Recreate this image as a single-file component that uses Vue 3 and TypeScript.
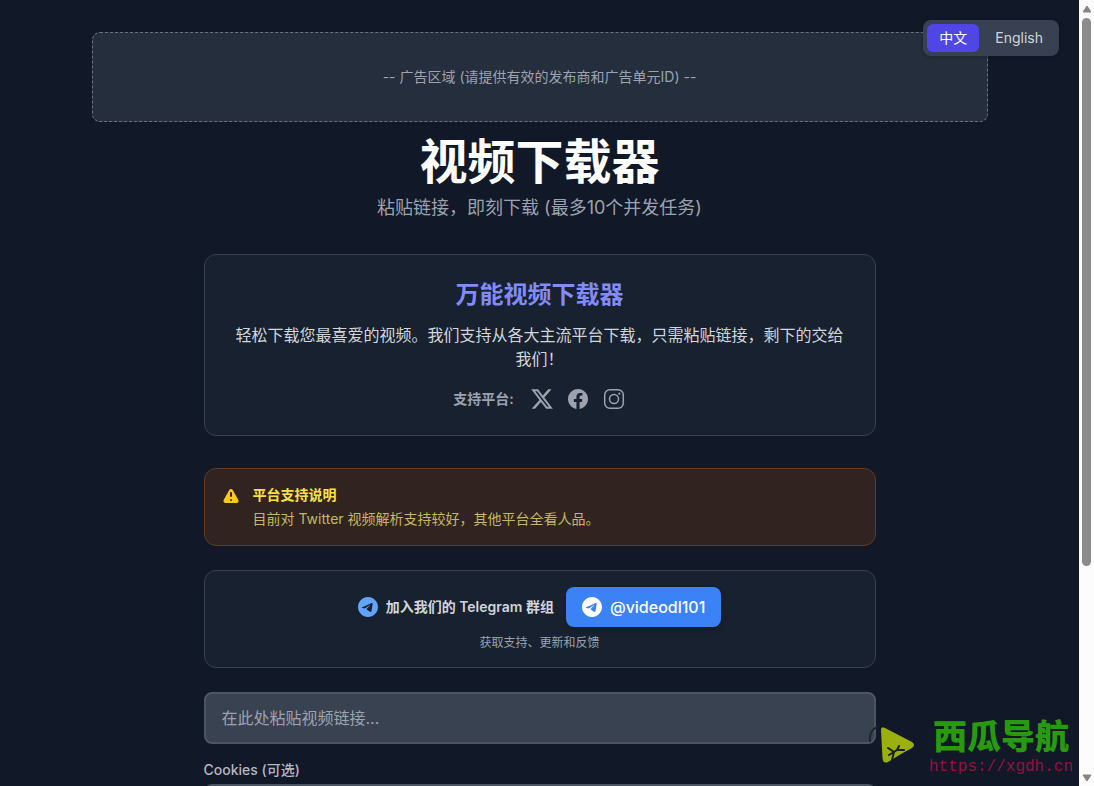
<script setup lang="ts">
import { ref } from 'vue'

type Lang = 'zh' | 'en'

const lang = ref<Lang>('zh')
const url = ref('')
const cookies = ref('')

const languages: { id: Lang; label: string }[] = [
  { id: 'zh', label: '中文' },
  { id: 'en', label: 'English' },
]
</script>

<template>
  <div class="shell">
    <div class="page">
      <nav class="lang" aria-label="Language">
        <button
          v-for="item in languages"
          :key="item.id"
          type="button"
          :class="['lang-btn', { active: lang === item.id }]"
          @click="lang = item.id"
        >{{ item.label }}</button>
      </nav>

      <div class="container">
        <aside class="ad">-- 广告区域 (请提供有效的发布商和广告单元ID) --</aside>

        <header class="head">
          <h1>视频下载器</h1>
          <p>粘贴链接，即刻下载 (最多10个并发任务)</p>
        </header>

        <main class="main">
          <section class="card intro">
            <h2>万能视频下载器</h2>
            <p class="desc">轻松下载您最喜爱的视频。我们支持从各大主流平台下载，只需粘贴链接，剩下的交给我们！</p>
            <div class="platforms">
              <span>支持平台:</span>
              <svg viewBox="0 0 24 24" aria-label="X"><path fill="currentColor" d="M18.244 2.25h3.308l-7.227 8.26 8.502 11.24H16.17l-5.214-6.817L4.99 21.75H1.68l7.73-8.835L1.254 2.25H8.08l4.713 6.231zm-1.161 17.52h1.833L7.084 4.126H5.117z" /></svg>
              <svg viewBox="0 0 24 24" aria-label="Facebook"><path fill="currentColor" d="M22 12c0-5.523-4.477-10-10-10S2 6.477 2 12c0 4.991 3.657 9.128 8.438 9.878v-6.987h-2.54V12h2.54V9.797c0-2.506 1.492-3.89 3.777-3.89 1.094 0 2.238.195 2.238.195v2.46h-1.26c-1.243 0-1.63.771-1.63 1.562V12h2.773l-.443 2.89h-2.33v6.988C18.343 21.128 22 16.991 22 12z" /></svg>
              <svg viewBox="0 0 24 24" fill="none" stroke="currentColor" aria-label="Instagram">
                <rect x="2.700" y="2.700" width="18.600" height="18.600" rx="5.200" stroke-width="1.500" />
                <circle cx="12" cy="12" r="4.500" stroke-width="1.500" />
                <circle cx="17.300" cy="6.700" r="1.100" fill="currentColor" stroke="none" />
              </svg>
            </div>
          </section>

          <section class="notice">
            <svg viewBox="0 0 20 20" aria-hidden="true"><path fill="currentColor" fill-rule="evenodd" d="M8.257 3.099c.765-1.36 2.722-1.36 3.486 0l5.58 9.92c.75 1.334-.213 2.98-1.742 2.98H4.42c-1.53 0-2.493-1.646-1.743-2.98l5.58-9.92zM11 13a1 1 0 11-2 0 1 1 0 012 0zm-1-8a1 1 0 00-1 1v3a1 1 0 002 0V6a1 1 0 00-1-1z" clip-rule="evenodd" /></svg>
            <div>
              <h3>平台支持说明</h3>
              <p>目前对 Twitter 视频解析支持较好，其他平台全看人品。</p>
            </div>
          </section>

          <section class="card telegram">
            <div class="join">
              <span class="join-label">
                <svg viewBox="2 2 20 20" aria-hidden="true"><path fill="currentColor" d="M12 2C6.48 2 2 6.48 2 12s4.48 10 10 10 10-4.48 10-10S17.52 2 12 2zm4.64 6.8c-.15 1.58-.8 5.42-1.13 7.19-.14.75-.42 1-.68 1.03-.58.05-1.02-.38-1.58-.75-.88-.58-1.38-.94-2.23-1.5-.99-.65-.35-1.01.22-1.59.15-.15 2.71-2.48 2.76-2.69a.2.2 0 00-.05-.18c-.06-.05-.14-.03-.21-.02-.09.02-1.49.95-4.22 2.79-.4.27-.76.41-1.08.4-.36-.01-1.04-.2-1.55-.37-.63-.2-1.12-.31-1.08-.66.02-.18.27-.36.74-.55 2.92-1.27 4.86-2.11 5.83-2.51 2.78-1.16 3.35-1.36 3.73-1.36.08 0 .27.02.39.12.1.08.13.19.14.27-.01.06.01.24 0 .38z" /></svg>
                加入我们的 Telegram 群组
              </span>
              <a class="join-btn" href="#videodl101">
                <svg viewBox="2 2 20 20" aria-hidden="true"><path fill="currentColor" d="M12 2C6.48 2 2 6.48 2 12s4.48 10 10 10 10-4.48 10-10S17.52 2 12 2zm4.64 6.8c-.15 1.58-.8 5.42-1.13 7.19-.14.75-.42 1-.68 1.03-.58.05-1.02-.38-1.58-.75-.88-.58-1.38-.94-2.23-1.5-.99-.65-.35-1.01.22-1.59.15-.15 2.71-2.48 2.76-2.69a.2.2 0 00-.05-.18c-.06-.05-.14-.03-.21-.02-.09.02-1.49.95-4.22 2.79-.4.27-.76.41-1.08.4-.36-.01-1.04-.2-1.55-.37-.63-.2-1.12-.31-1.08-.66.02-.18.27-.36.74-.55 2.92-1.27 4.86-2.11 5.83-2.51 2.78-1.16 3.35-1.36 3.73-1.36.08 0 .27.02.39.12.1.08.13.19.14.27-.01.06.01.24 0 .38z" /></svg>
                @videodl101
              </a>
            </div>
            <p>获取支持、更新和反馈</p>
          </section>

          <form class="form" @submit.prevent>
            <input v-model="url" class="field" type="text" aria-label="视频链接" placeholder="在此处粘贴视频链接..." />
            <label for="cookies">Cookies (可选)</label>
            <textarea id="cookies" v-model="cookies" class="field" rows="3"></textarea>
          </form>
        </main>
      </div>

      <div class="brand">
        <svg viewBox="0 0 50 46" aria-hidden="true">
          <path d="M10 4C5 6 2 11 3 19" fill="none" stroke="#20262c" stroke-width="2" />
          <path d="M14 7Q14 3 18 5L45 19Q49 22 45 25L34 31L21 39Q16 41 15.500 35Z" fill="#9ab00c" />
          <path d="M25 37L27 29L21 25M27 29L30 27L32 23M30 27L37 27M27 29L22 32" fill="none" stroke="#17201f" stroke-width="2" stroke-linecap="round" />
        </svg>
        <div>
          <div class="brand-name">西瓜导航</div>
          <div class="brand-url">https://xgdh.cn</div>
        </div>
      </div>
    </div>

    <div class="scrollbar" aria-hidden="true">
      <svg viewBox="0 0 10 8"><path d="M5 1L9 7H1Z" fill="#858585" stroke="#858585" stroke-linejoin="round" /></svg>
      <div class="track"><div class="thumb"></div></div>
      <svg viewBox="0 0 10 8"><path d="M5 7L9 1H1Z" fill="#858585" stroke="#858585" stroke-linejoin="round" /></svg>
    </div>
  </div>
</template>

<style>
body {
  margin: 0;
  background: #111827;
}
</style>

<style scoped>
* {
  box-sizing: border-box;
}

h1, h2, h3, p {
  margin: 0;
}

svg {
  display: block;
  flex: none;
}

button, input, textarea {
  font: inherit;
}

.shell {
  display: flex;
  height: 100vh;
  overflow: hidden;
  background: #111827;
  color: #e5e7eb;
  font: 16px/24px Inter, "Noto Sans CJK SC", sans-serif;
}

.page {
  position: relative;
  flex: 1;
  min-width: 0;
  overflow: hidden;
  padding: 32px 16px 0;
}

.lang {
  position: absolute;
  top: 20px;
  right: 20px;
  z-index: 2;
  display: flex;
  gap: 4px;
  padding: 4px;
  border-radius: 8px;
  background: #374151;
  box-shadow: 0 1px 4px rgba(0, 0, 0, 0.2);
}

.lang-btn {
  padding: 4px 12px;
  border: 0;
  border-radius: 6px;
  background: transparent;
  color: #d1d5db;
  font-size: 14px;
  line-height: 20px;
  cursor: pointer;
}

.lang-btn.active {
  background: #4f46e5;
  color: #fff;
}

.container {
  max-width: 896px;
  margin: 0 auto;
}

.ad {
  display: flex;
  align-items: center;
  justify-content: center;
  min-height: 90px;
  margin-bottom: 16px;
  border: 1px dashed #6b7280;
  border-radius: 8px;
  background: #252e3c;
  color: #9ca3af;
  font-size: 14px;
}

.head {
  margin-bottom: 32px;
  text-align: center;
}

.head h1 {
  margin-bottom: 8px;
  color: #fff;
  font-size: 48px;
  line-height: 48px;
  font-weight: 700;
}

.head p {
  color: #9ca3af;
  font-size: 18px;
  line-height: 28px;
}

.main {
  max-width: 672px;
  margin: 0 auto;
}

.card {
  border: 1px solid #374151;
  border-radius: 12px;
  background: #18212f;
  text-align: center;
}

.intro {
  margin-bottom: 32px;
  padding: 24px;
}

.intro h2 {
  margin-bottom: 12px;
  color: #818cf8;
  font-size: 24px;
  line-height: 32px;
  font-weight: 700;
}

.desc {
  margin-bottom: 16px;
  color: #d1d5db;
}

.platforms {
  display: flex;
  align-items: center;
  justify-content: center;
  gap: 12px;
  color: #9ca3af;
  font-size: 14px;
  font-weight: 600;
}

.platforms span {
  margin-right: 4px;
}

.platforms svg {
  width: 24px;
  height: 24px;
}

.notice {
  display: flex;
  gap: 12px;
  margin-bottom: 24px;
  padding: 16px;
  border: 1px solid #633b20;
  border-radius: 12px;
  background: #312420;
  font-size: 14px;
  line-height: 20px;
}

.notice svg {
  width: 20px;
  height: 20px;
  margin-top: 2px;
  color: #facc15;
}

.notice h3 {
  margin-bottom: 4px;
  color: #fde047;
  font-size: 14px;
  font-weight: 600;
}

.notice p {
  color: #c5b862;
}

.telegram {
  margin-bottom: 24px;
  padding: 16px;
}

.join {
  display: flex;
  align-items: center;
  justify-content: center;
  gap: 12px;
  margin-bottom: 8px;
}

.join svg {
  width: 20px;
  height: 20px;
}

.join-label {
  display: flex;
  align-items: center;
  gap: 8px;
  color: #d1d5db;
  font-size: 14px;
  font-weight: 600;
}

.join-label svg {
  color: #60a5fa;
}

.join-btn {
  display: flex;
  align-items: center;
  gap: 8px;
  padding: 8px 16px;
  border-radius: 8px;
  background: #3b82f6;
  color: #fff;
  font-weight: 500;
  text-decoration: none;
  box-shadow: 0 4px 6px rgba(0, 0, 0, 0.15);
}

.telegram p {
  color: #9ca3af;
  font-size: 12px;
  line-height: 16px;
}

.field {
  display: block;
  width: 100%;
  padding: 12px 16px;
  border: 2px solid #4b5563;
  border-radius: 8px;
  background: #384250;
  color: #fff;
  outline: 0;
}

input.field {
  height: 52px;
}

.field::placeholder {
  color: #9ca3af;
  opacity: 1;
}

.form label {
  display: block;
  margin: 16px 0 4px;
  color: #b3b9c4;
  font-size: 14px;
  line-height: 20px;
  font-weight: 500;
}

.brand {
  position: absolute;
  right: 6px;
  bottom: 11px;
  z-index: 2;
  display: flex;
  align-items: center;
  gap: 12px;
}

.brand svg {
  width: 50px;
  height: 46px;
}

.brand-name {
  margin-bottom: 6px;
  color: #289a10;
  font-family: "Noto Sans CJK SC", sans-serif;
  font-size: 34px;
  line-height: 36px;
  font-weight: 900;
  text-align: center;
}

.brand-url {
  color: #98103f;
  font-family: "Liberation Mono", monospace;
  font-size: 16px;
  line-height: 16px;
}

.scrollbar {
  display: flex;
  flex: none;
  flex-direction: column;
  align-items: center;
  gap: 5px;
  width: 15px;
  padding: 5px 0 4px;
  background: #fcfcfc;
}

.scrollbar svg {
  width: 10px;
  height: 8px;
}

.track {
  flex: 1;
}

.thumb {
  width: 9px;
  height: 73%;
  border-radius: 5px;
  background: #8b8b8b;
}
</style>
